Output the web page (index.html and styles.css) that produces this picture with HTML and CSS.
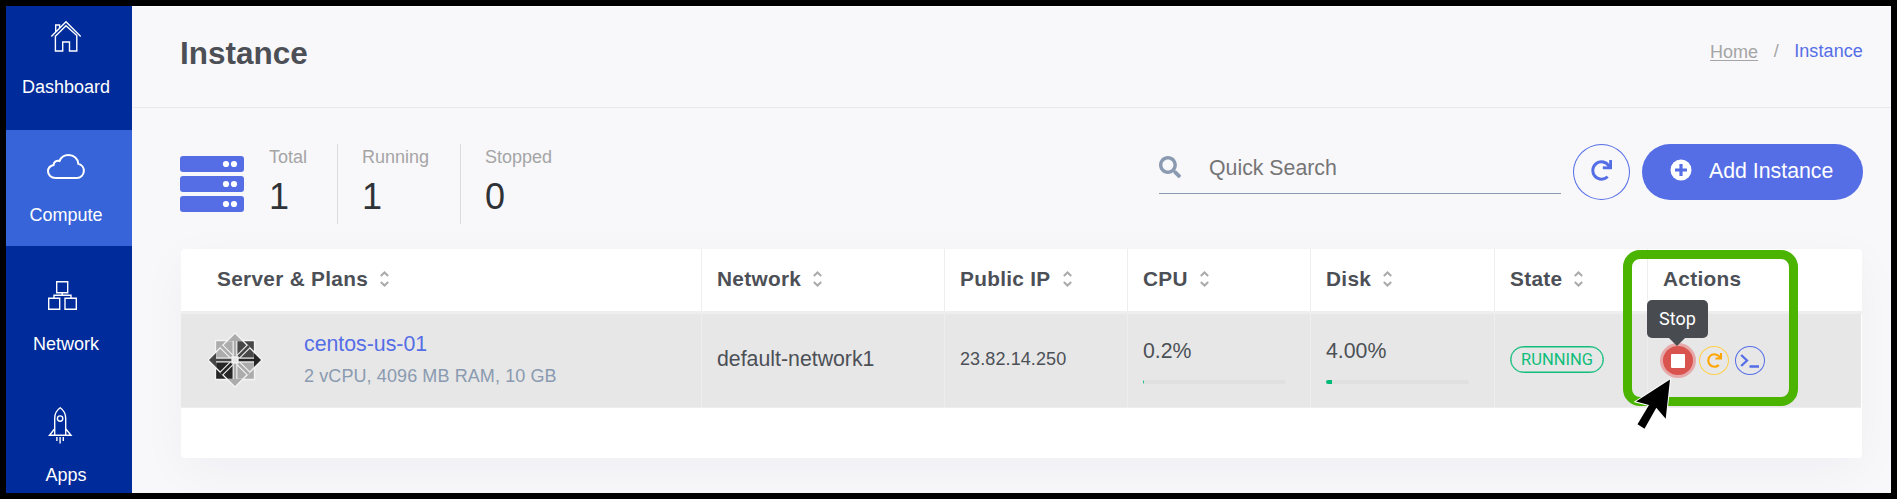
FILE: index.html
```html
<!DOCTYPE html>
<html lang="en">
<head>
<meta charset="utf-8">
<title>Instance</title>
<link rel="stylesheet" href="styles.css">
</head>
<body>
<div class="frame">
  <nav class="sidebar">
    <a class="nav-item nav-dashboard">
      <svg width="40" height="34" viewBox="46 20 40 34" fill="none" stroke="#fff" stroke-width="1.4"><path d="M51.3 36.5 66 21.8l14.7 14.7M55.4 35.5V51h7.3v-9h6.8v9h7.3V35.5L66 25.8 55.4 36.2M55.7 31.5V25h3.900v3"/></svg>
      <span>Dashboard</span>
    </a>
    <a class="nav-item nav-compute active">
      <svg width="40" height="32" viewBox="46 150 40 32" fill="none" stroke="#fff" stroke-width="2"><path d="M55.500 178h21.500a7.200 7.200 0 0 0 1.300-14.200C78 159 74 155 68.500 155c-4.300 0-7.500 2.300-9 6-3.500-.8-5.800 1.200-5.900 4-3.300.8-5.600 3.300-5.600 6.300 0 3.700 3 6.700 7.500 6.700z"/></svg>
      <span>Compute</span>
    </a>
    <a class="nav-item nav-network">
      <svg width="40" height="34" viewBox="46 278 40 34" fill="none" stroke="#fff" stroke-width="1.4"><path d="M56.700 281.700h11v11h-11zM48.700 298.200h11v11h-11zM65 298.200h11.300v11H65zM62.200 292.700v3M54 298v-2.700h17V298"/></svg>
      <span>Network</span>
    </a>
    <a class="nav-item nav-apps">
      <svg width="40" height="40" viewBox="46 405 40 40" fill="none" stroke="#fff" stroke-width="1.4"><path d="M54.700 435.300v-17c0-5 2.500-8.500 5.500-10.600 3 2.100 5.500 5.600 5.500 10.600v17M54.700 428.800l-5.200 6.500h21.500l-5.300-6.500M56.900 437v4M60.100 437v6.500M63.300 437v4"/><circle cx="60.100" cy="418.600" r="2.700"/></svg>
      <span>Apps</span>
    </a>
  </nav>
  <main class="main">
    <header class="page-header">
      <h1>Instance</h1>
      <div class="breadcrumb"><a class="home">Home</a><span class="slash">/</span><span class="current">Instance</span></div>
    </header>
    <section class="toolbar">
      <svg class="servers" width="64" height="56" viewBox="0 0 64 56"><g fill="#556ee6"><rect width="64" height="16" rx="3"/><rect y="20" width="64" height="16" rx="3"/><rect y="40" width="64" height="16" rx="3"/></g><g fill="#fff"><circle cx="46" cy="8" r="3.100"/><circle cx="54" cy="8" r="3.100"/><circle cx="46" cy="28" r="3.100"/><circle cx="54" cy="28" r="3.100"/><circle cx="46" cy="48" r="3.100"/><circle cx="54" cy="48" r="3.100"/></g></svg>
      <div class="stat stat-total"><span>Total</span><b>1</b></div>
      <div class="stat stat-running"><span>Running</span><b>1</b></div>
      <div class="stat"><span>Stopped</span><b>0</b></div>
      <div class="search">
        <svg width="22" height="22" viewBox="0 0 512 512" fill="#8a9ab0"><path d="M505 442.700L405.300 343c-4.500-4.500-10.600-7-17-7H372c27.600-35.300 44-79.700 44-128C416 93.100 322.900 0 208 0S0 93.100 0 208s93.100 208 208 208c48.300 0 92.700-16.400 128-44v16.300c0 6.400 2.500 12.500 7 17l99.700 99.700c9.400 9.400 24.600 9.400 33.900 0l28.300-28.300c9.400-9.400 9.400-24.600.1-34zM208 336c-70.700 0-128-57.200-128-128 0-70.700 57.200-128 128-128 70.700 0 128 57.200 128 128 0 70.700-57.200 128-128 128z"/></svg>
        <span>Quick Search</span>
      </div>
      <button class="refresh" aria-label="Refresh"><svg width="21" height="21" viewBox="0 0 512 512" fill="#556ee6"><path d="M500.330 0h-47.410a12 12 0 0 0-12 12.570l4 82.760A247.420 247.420 0 0 0 256 8C119.340 8 7.900 119.530 8 256.190 8.100 393.070 119.100 504 256 504a247.100 247.100 0 0 0 166.180-63.910 12 12 0 0 0 .48-17.430l-34-34a12 12 0 0 0-16.380-.55A176 176 0 1 1 402.100 157.800l-101.530-4.870a12 12 0 0 0-12.570 12v47.410a12 12 0 0 0 12 12h200.330a12 12 0 0 0 12-12V12a12 12 0 0 0-12-12z"/></svg></button>
      <button class="add">
        <svg width="22" height="22" viewBox="0 0 22 22"><circle cx="11" cy="11" r="10.500" fill="#fff"/><path d="M11 5v12M5 11h12" stroke="#556ee6" stroke-width="3.200"/></svg>
        <span>Add Instance</span>
      </button>
    </section>
    <section class="card">
      <div class="row head">
        <div class="cell first">Server &amp; Plans<svg class="sort" width="9" height="16" viewBox="0 0 9 16"><path d="M.8 5 4.500 1.500 8.200 5M.8 11 4.500 14.500 8.200 11"/></svg></div>
        <div class="cell">Network<svg class="sort" width="9" height="16" viewBox="0 0 9 16"><path d="M.8 5 4.500 1.500 8.200 5M.8 11 4.500 14.500 8.200 11"/></svg></div>
        <div class="cell">Public IP<svg class="sort" width="9" height="16" viewBox="0 0 9 16"><path d="M.8 5 4.500 1.500 8.200 5M.8 11 4.500 14.500 8.200 11"/></svg></div>
        <div class="cell">CPU<svg class="sort" width="9" height="16" viewBox="0 0 9 16"><path d="M.8 5 4.500 1.500 8.200 5M.8 11 4.500 14.500 8.200 11"/></svg></div>
        <div class="cell">Disk<svg class="sort" width="9" height="16" viewBox="0 0 9 16"><path d="M.8 5 4.500 1.500 8.200 5M.8 11 4.500 14.500 8.200 11"/></svg></div>
        <div class="cell">State<svg class="sort" width="9" height="16" viewBox="0 0 9 16"><path d="M.8 5 4.500 1.500 8.200 5M.8 11 4.500 14.500 8.200 11"/></svg></div>
        <div class="cell">Actions</div>
      </div>
      <div class="row data">
        <div class="cell server">
          <svg class="os" width="56" height="56" viewBox="-28 -28 56 56">
            <g stroke="#f4f4f4" stroke-width="1.300">
              <path d="M-19.500-19.500H0V0h-19.500z" fill="#acacac"/><path d="M0-19.500h19.500V0H0z" fill="#474747"/>
              <path d="M-19.500 0H0v19.500h-19.500z" fill="#262626"/><path d="M0 0h19.500v19.500H0z" fill="#acacac"/>
              <path d="M0-27-8-19H8z" fill="#acacac" stroke="none"/><path d="M0 27-8 19H8z" fill="#acacac" stroke="none"/>
              <path d="M-27 0l8-8V8z" fill="#474747" stroke="none"/><path d="M27 0l-8-8V8z" fill="#262626" stroke="none"/>
              <path d="M0-27 27 0 0 27-27 0z" fill="none"/>
              <path d="M-13.500-13.500 13.500 13.500" stroke-width="4.800"/><path d="M-13.500 13.500 13.500-13.500" stroke-width="4.800"/>
              <path d="M-14-14 0 0" stroke="#acacac" stroke-width="2.600"/><path d="M14 14 0 0" stroke="#acacac" stroke-width="2.600"/>
              <path d="M14-14 0 0" stroke="#474747" stroke-width="2.600"/><path d="M-14 14 0 0" stroke="#262626" stroke-width="2.600"/>
              <path d="M0-19V19M-19 0H19" stroke-width="4.800"/>
              <path d="M0-21V21" stroke="#acacac" stroke-width="2.600"/><path d="M-21 0H0" stroke="#474747" stroke-width="2.600"/><path d="M0 0H21" stroke="#262626" stroke-width="2.600"/>
              <rect x="-3" y="-3" width="6" height="6" fill="#e7e7e7"/>
            </g>
          </svg>
          <div class="server-text"><a>centos-us-01</a><span>2 vCPU, 4096 MB RAM, 10 GB</span></div>
        </div>
        <div class="cell name">default-network1</div>
        <div class="cell ip">23.82.14.250</div>
        <div class="cell usage"><span>0.2%</span><div class="bar"><i style="width:0.6%"></i></div></div>
        <div class="cell usage"><span>4.00%</span><div class="bar"><i style="width:4%"></i></div></div>
        <div class="cell state"><span class="pill">RUNNING</span></div>
        <div class="cell actions">
          <span class="act stop"><i></i><span class="tooltip">Stop</span></span>
          <span class="act restart"><svg width="15" height="15" viewBox="0 0 512 512" fill="#ffa500"><path d="M500.330 0h-47.410a12 12 0 0 0-12 12.570l4 82.760A247.420 247.420 0 0 0 256 8C119.340 8 7.900 119.530 8 256.190 8.100 393.070 119.100 504 256 504a247.100 247.100 0 0 0 166.180-63.910 12 12 0 0 0 .48-17.430l-34-34a12 12 0 0 0-16.380-.55A176 176 0 1 1 402.100 157.800l-101.530-4.870a12 12 0 0 0-12.570 12v47.410a12 12 0 0 0 12 12h200.330a12 12 0 0 0 12-12V12a12 12 0 0 0-12-12z"/></svg></span>
          <span class="act console"><svg width="20" height="16" viewBox="0 0 20 16" fill="none" stroke="#556ee6" stroke-width="2.300"><path d="M1.200 2 7 7.500l-5.800 5.500M9.500 13.500H19"/></svg></span>
        </div>
      </div>
    </section>
  </main>
  <div class="highlight"></div>
  <svg class="cursor" width="40" height="56" viewBox="1633 376 40 56"><path d="M1670 379.500 1636 401.500l13 3.500-11.500 19.300 7 4.500 11.800-21 9.400 11z" fill="#000" stroke="#fff" stroke-width="2" paint-order="stroke"/></svg>
</div>
</body>
</html>
```
FILE: styles.css
```css
* { box-sizing: border-box; }
body { margin: 0; font-family: "Liberation Sans", Arial, sans-serif; color: #4c5056; background: #000; }
svg { display: block; flex: none; }
.frame { position: relative; width: 1897px; height: 499px; border: 6px solid #000; display: flex; overflow: hidden; }

.sidebar { width: 126px; background: #002b9a; color: #fff; flex: none; }
.nav-item { display: flex; flex-direction: column; align-items: center; padding-right: 6px; font-size: 18px; line-height: 22px; }
.nav-dashboard { height: 124px; padding-top: 14px; gap: 22px; }
.nav-compute { height: 116px; padding-top: 20px; gap: 22px; }
.nav-network { height: 125px; padding-top: 32px; gap: 21px; }
.nav-apps { height: 122px; padding-top: 34px; gap: 19px; }
.nav-item.active { background: #3765d9; }

.main { flex: 1; background: #f8f8fb; border-top: 1px solid #fff; min-width: 0; overflow: hidden; }
.page-header { height: 101px; border-bottom: 1px solid #e9e9ec; padding: 26px 28px 0 48px; display: flex; justify-content: space-between; align-items: flex-start; }
h1 { margin: 0; font-size: 31.500px; line-height: 40px; font-weight: 700; color: #4c5056; }
.breadcrumb { display: flex; padding-top: 7px; font-size: 18px; line-height: 22px; color: #a5a5a5; }
.home { margin-top: 1px; text-decoration: underline; text-underline-offset: 2px; }
.slash { margin: 0 15.500px; }
.current { color: #556ee6; letter-spacing: .1px; }

.toolbar { display: flex; align-items: flex-start; padding: 36px 28px 0 48px; height: 141px; }
.servers { margin: 12px 25px 0 0; }
.stat { height: 80px; padding-top: 2px; display: flex; flex-direction: column; gap: 7px; font-size: 18px; line-height: 22px; color: #a5a5a5; border-left: 1px solid #dcdcdf; padding-left: 24px; }
.stat b { font-weight: 400; font-size: 36px; line-height: 44px; color: #2f3237; }
.stat-total { width: 68px; border: 0; padding-left: 0; }
.stat-running { width: 123px; }
.search { margin-left: auto; width: 402px; height: 50px; border-bottom: 1px solid #8a9ab0; display: flex; padding-top: 12px; gap: 28px; font-size: 21.300px; line-height: 24px; color: #757575; }
button { font: inherit; border: 0; padding: 0; }
.refresh { margin-left: 12px; width: 57px; height: 56px; border: 1px solid #556ee6; border-radius: 50%; background: none; display: flex; align-items: flex-start; justify-content: center; padding-top: 15px; }
.add { margin-left: 12px; width: 221px; height: 56px; border-radius: 28px; background: #556ee6; color: #fff; display: flex; align-items: flex-start; padding: 15px 0 0 28px; gap: 17px; font-size: 21.300px; line-height: 24px; }

.card { margin-left: 49px; width: 1681px; height: 209px; border-radius: 4px; background: #fff; box-shadow: 0 12px 48px rgba(18, 38, 63, .04); }
.row { display: grid; grid-template-columns: 520px 243px 183px 183px 184px 153px 1fr; }
.cell { border-left: 1px solid #eee; padding-left: 15px; }
.head { height: 65px; border-bottom: 3px solid #eee; font-size: 20.800px; font-weight: 700; line-height: 24px; letter-spacing: .3px; }
.head .cell { display: flex; padding-top: 18px; }
.head .first { border: 0; padding-left: 36px; }
.sort { margin: 4px 0 0 12px; fill: none; stroke: #aaa; stroke-width: 2; }
.data { height: 94px; width: 1680px; background: #e7e7e7; border-bottom: 1px solid #eee; font-size: 21.300px; line-height: 24px; }
.server { display: flex; border: 0; padding: 18px 0 0 26px; }
.server-text { display: flex; flex-direction: column; padding-left: 41px; }
.server-text a { color: #556ee6; }
.server-text span { font-size: 18px; color: #8a9ab0; letter-spacing: .1px; margin-top: 8px; }
.name { padding-top: 33px; }
.ip { padding-top: 33px; font-size: 18px; letter-spacing: .1px; }
.usage { padding-top: 25px; }
.usage span { display: block; }
.bar { width: 143px; height: 4px; margin-top: 17px; border-radius: 2px; background: #e0e0e0; overflow: hidden; }
.bar i { display: block; height: 4px; background: #00ba78; }
.state { padding-top: 32px; }
.pill { display: block; width: 94px; height: 27px; border: 1px solid #10bd7b; box-shadow: inset 0 0 0 .5px #10bd7b; border-radius: 14px; color: #10bd7b; text-align: center; font: 16.500px/26px Roboto, sans-serif; }
.actions { display: flex; padding-top: 32px; gap: 6px; }
.act { position: relative; width: 30px; height: 29px; border-radius: 50%; display: flex; align-items: center; justify-content: center; }
.stop { background: #d9534f; box-shadow: 0 0 0 3px #e6a8a8; }
.stop i { width: 14px; height: 14px; border-radius: 1px; background: #fff; }
.restart { border: 1px solid #ffcf4b; }
.console { border: 1px solid #556ee6; }
.tooltip { position: absolute; left: -16px; top: -46px; width: 61px; height: 38px; border-radius: 5px; background: #484b50; color: #fff; text-align: center; font: 18px/37px Roboto, sans-serif; }
.tooltip::after { content: ""; position: absolute; left: 21px; top: 37px; border: 9px solid transparent; border-top-color: #484b50; border-bottom: 0; }
.highlight { position: absolute; left: 1617px; top: 244px; width: 175px; height: 156px; border: 9px solid #4ab400; border-radius: 17px; }
.cursor { position: absolute; left: 1627px; top: 370px; }
```
